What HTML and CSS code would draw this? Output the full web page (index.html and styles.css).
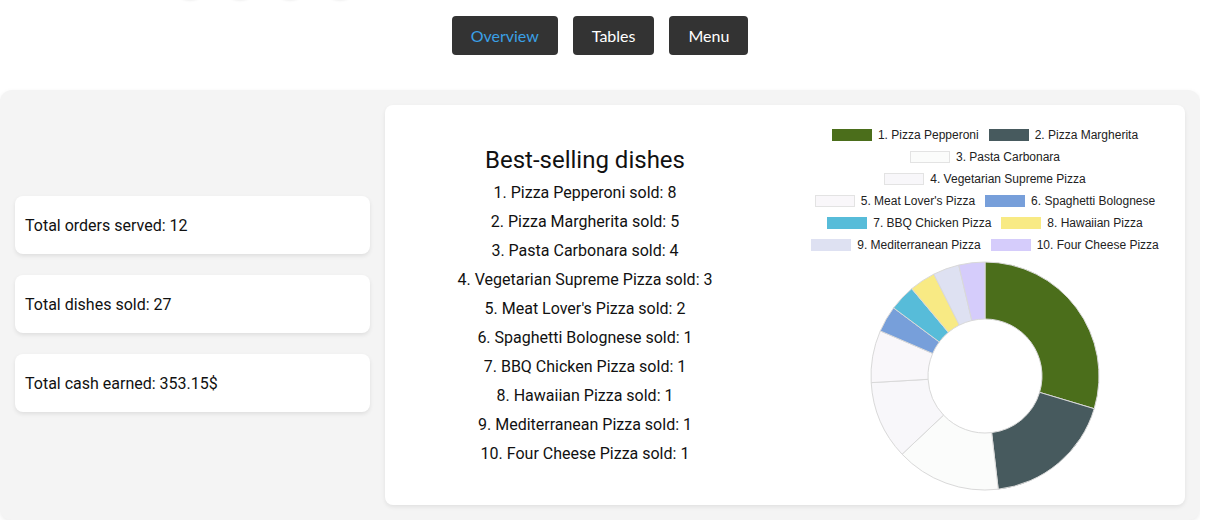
FILE: index.html
```html
<!DOCTYPE html>
<html lang="en">
<head>
<meta charset="utf-8">
<title>Overview</title>
<link rel="stylesheet" href="styles.css">
</head>
<body>
<div class="app">
  <div class="dots">
    <span class="dot"></span><span class="dot"></span><span class="dot"></span><span class="dot"></span>
  </div>
  <nav class="nav">
    <button class="nav-btn active">Overview</button>
    <button class="nav-btn">Tables</button>
    <button class="nav-btn">Menu</button>
  </nav>
  <main class="panel">
    <section class="stats">
      <div class="stat-card">Total orders served: 12</div>
      <div class="stat-card">Total dishes sold: 27</div>
      <div class="stat-card">Total cash earned: 353.15$</div>
    </section>
    <section class="dishes-card">
      <div class="dishes-list">
        <h2 class="dishes-title">Best-selling dishes</h2>
        <p class="dish">1. Pizza Pepperoni sold: 8</p>
        <p class="dish">2. Pizza Margherita sold: 5</p>
        <p class="dish">3. Pasta Carbonara sold: 4</p>
        <p class="dish">4. Vegetarian Supreme Pizza sold: 3</p>
        <p class="dish">5. Meat Lover's Pizza sold: 2</p>
        <p class="dish">6. Spaghetti Bolognese sold: 1</p>
        <p class="dish">7. BBQ Chicken Pizza sold: 1</p>
        <p class="dish">8. Hawaiian Pizza sold: 1</p>
        <p class="dish">9. Mediterranean Pizza sold: 1</p>
        <p class="dish">10. Four Cheese Pizza sold: 1</p>
      </div>
      <div class="chart">
        <div class="legend">
          <div class="legend-row">
            <span class="legend-item"><span class="sw sw1"></span>1. Pizza Pepperoni</span>
            <span class="legend-item"><span class="sw sw2"></span>2. Pizza Margherita</span>
          </div>
          <div class="legend-row">
            <span class="legend-item"><span class="sw sw3"></span>3. Pasta Carbonara</span>
          </div>
          <div class="legend-row">
            <span class="legend-item"><span class="sw sw4"></span>4. Vegetarian Supreme Pizza</span>
          </div>
          <div class="legend-row">
            <span class="legend-item"><span class="sw sw5"></span>5. Meat Lover's Pizza</span>
            <span class="legend-item"><span class="sw sw6"></span>6. Spaghetti Bolognese</span>
          </div>
          <div class="legend-row">
            <span class="legend-item"><span class="sw sw7"></span>7. BBQ Chicken Pizza</span>
            <span class="legend-item"><span class="sw sw8"></span>8. Hawaiian Pizza</span>
          </div>
          <div class="legend-row">
            <span class="legend-item"><span class="sw sw9"></span>9. Mediterranean Pizza</span>
            <span class="legend-item"><span class="sw sw10"></span>10. Four Cheese Pizza</span>
          </div>
        </div>
        <svg class="donut" width="240" height="240" viewBox="-120 -120 240 240">
          <g stroke="#d9d9d9" stroke-width="1">
            <path fill="#4b6e1b" d="M0 -114 A114 114 0 0 1 109.22 32.70 L54.61 16.35 A57 57 0 0 0 0 -57 Z"/>
            <path fill="#475a5e" d="M109.22 32.70 A114 114 0 0 1 13.23 113.23 L6.62 56.61 A57 57 0 0 0 54.61 16.35 Z"/>
            <path fill="#fbfcfb" d="M13.23 113.23 A114 114 0 0 1 -82.92 78.23 L-41.46 39.12 A57 57 0 0 0 6.62 56.61 Z"/>
            <path fill="#f8f7fa" d="M-82.92 78.23 A114 114 0 0 1 -113.81 6.63 L-56.90 3.31 A57 57 0 0 0 -41.46 39.12 Z"/>
            <path fill="#f9f7fa" d="M-113.81 6.63 A114 114 0 0 1 -104.71 -45.08 L-52.35 -22.54 A57 57 0 0 0 -56.90 3.31 Z"/>
            <path fill="#779fda" d="M-104.71 -45.08 A114 114 0 0 1 -91.43 -68.10 L-45.71 -34.05 A57 57 0 0 0 -52.35 -22.54 Z"/>
            <path fill="#57bcd9" d="M-91.43 -68.10 A114 114 0 0 1 -73.28 -87.33 L-36.64 -43.66 A57 57 0 0 0 -45.71 -34.05 Z"/>
            <path fill="#f8ea84" d="M-73.28 -87.33 A114 114 0 0 1 -51.16 -101.87 L-25.58 -50.94 A57 57 0 0 0 -36.64 -43.66 Z"/>
            <path fill="#dee1f2" d="M-51.16 -101.87 A114 114 0 0 1 -26.29 -110.93 L-13.15 -55.46 A57 57 0 0 0 -25.58 -50.94 Z"/>
            <path fill="#d5ccfb" d="M-26.29 -110.93 A114 114 0 0 1 0 -114 L0 -57 A57 57 0 0 0 -13.15 -55.46 Z"/>
          </g>
        </svg>
      </div>
    </section>
  </main>
</div>
</body>
</html>
```

FILE: styles.css
```css
* {
  box-sizing: border-box;
}

html, body {
  margin: 0;
  padding: 0;
  background: #ffffff;
}

body {
  font-family: Roboto, "Liberation Sans", Arial, sans-serif;
  color: #111;
}

.app {
  width: 1200px;
  overflow: hidden;
}

.dots {
  height: 0;
  display: flex;
  gap: 14px;
  padding-left: 172px;
}

.dot {
  display: block;
  width: 36px;
  height: 36px;
  margin-top: -37px;
  border-radius: 50%;
  background: #ffffff;
  box-shadow: 0 1px 3px rgba(0, 0, 0, 0.12);
  flex: none;
}

.nav {
  display: flex;
  justify-content: center;
  gap: 15px;
  padding-top: 16px;
  height: 90px;
}

.nav-btn {
  height: 39px;
  padding: 0 19px;
  border: none;
  border-radius: 4px;
  background: #333333;
  color: #ffffff;
  font-family: Lato, "Open Sans", sans-serif;
  font-size: 16px;
  font-weight: 400;
  cursor: pointer;
}

.nav-btn.active {
  color: #3aa0e6;
}

.panel {
  display: flex;
  gap: 15px;
  padding: 15px;
  height: 430px;
  background: #f4f4f4;
  border-radius: 12px;
  box-shadow: 0 2px 5px rgba(0, 0, 0, 0.08);
}

.stats {
  width: 355px;
  flex: none;
  display: flex;
  flex-direction: column;
  justify-content: center;
  gap: 21px;
  padding-bottom: 2px;
}

.stat-card {
  height: 58px;
  display: flex;
  align-items: center;
  padding-left: 10px;
  background: #ffffff;
  border-radius: 8px;
  box-shadow: 0 2px 4px rgba(0, 0, 0, 0.09);
  font-size: 16px;
}

.dishes-card {
  width: 800px;
  flex: none;
  display: grid;
  grid-template-columns: 1fr 1fr;
  background: #ffffff;
  border-radius: 8px;
  box-shadow: 0 2px 4px rgba(0, 0, 0, 0.08);
}

.dishes-list {
  display: flex;
  flex-direction: column;
  justify-content: center;
  align-items: center;
  padding-top: 4px;
}

.dishes-title {
  margin: 0 0 4px;
  font-size: 24px;
  font-weight: 400;
  line-height: 28px;
}

.dish {
  margin: 0;
  font-size: 16px;
  line-height: 29px;
}

.chart {
  display: flex;
  flex-direction: column;
  align-items: center;
  padding-top: 19px;
}

.legend {
  display: flex;
  flex-direction: column;
  align-items: center;
  font-family: "Liberation Sans", Arial, sans-serif;
  font-size: 12px;
  color: #222;
}

.legend-row {
  height: 22px;
  display: flex;
  align-items: center;
  justify-content: center;
  gap: 10px;
}

.legend-item {
  display: flex;
  align-items: center;
  gap: 6px;
  white-space: nowrap;
}

.sw {
  display: block;
  width: 40px;
  height: 12px;
  border: 1px solid #e3e3e3;
}

.sw1 { background: #4b6e1b; border-color: #4b6e1b; }
.sw2 { background: #475a5e; border-color: #475a5e; }
.sw3 { background: #fbfcfb; }
.sw4 { background: #f8f7fa; }
.sw5 { background: #f9f7fa; }
.sw6 { background: #779fda; border-color: #779fda; }
.sw7 { background: #57bcd9; border-color: #57bcd9; }
.sw8 { background: #f8ea84; border-color: #f8ea84; }
.sw9 { background: #dee1f2; border-color: #dee1f2; }
.sw10 { background: #d5ccfb; border-color: #d5ccfb; }

.donut {
  display: block;
}
```
